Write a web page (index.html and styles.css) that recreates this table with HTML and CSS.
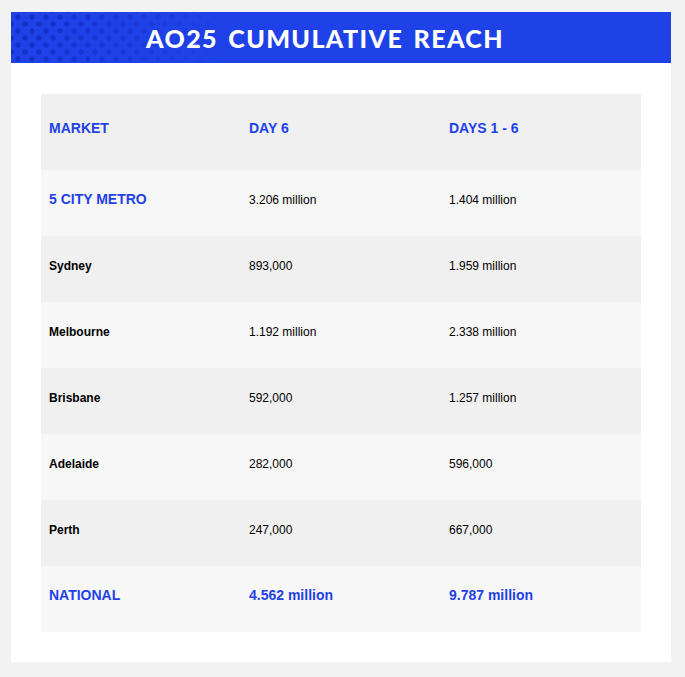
FILE: index.html
```html
<!DOCTYPE html>
<html>
<head>
<meta charset="utf-8">
<link rel="stylesheet" href="styles.css">
</head>
<body>
<div class="card">
  <div class="banner">
    <h1 class="title">AO25 CUMULATIVE REACH</h1>
  </div>
  <div class="content">
    <table class="reach">
      <tr class="head"><th>MARKET</th><th>DAY 6</th><th>DAYS 1 - 6</th></tr>
      <tr class="light"><td class="metro">5 CITY METRO</td><td>3.206 million</td><td>1.404 million</td></tr>
      <tr class="dark"><td class="city">Sydney</td><td>893,000</td><td>1.959 million</td></tr>
      <tr class="light"><td class="city">Melbourne</td><td>1.192 million</td><td>2.338 million</td></tr>
      <tr class="dark"><td class="city">Brisbane</td><td>592,000</td><td>1.257 million</td></tr>
      <tr class="light"><td class="city">Adelaide</td><td>282,000</td><td>596,000</td></tr>
      <tr class="dark"><td class="city">Perth</td><td>247,000</td><td>667,000</td></tr>
      <tr class="light total"><td>NATIONAL</td><td>4.562 million</td><td>9.787 million</td></tr>
    </table>
  </div>
</div>
</body>
</html>
```
FILE: styles.css
```css
html, body { margin: 0; padding: 0; }
body {
  background: #f2f2f2;
  font-family: "Liberation Sans", Arial, sans-serif;
  padding: 12px 14px 15px 11px;
}
.card {
  background: #ffffff;
  width: 660px;
}
.banner {
  height: 51px;
  background-color: #1f42e8;
  background-image:
    radial-gradient(circle, rgba(16, 42, 190, 0.8) 2.4px, transparent 3px),
    radial-gradient(circle, rgba(16, 42, 190, 0.8) 2.4px, transparent 3px);
  background-size: 14px 14px, 14px 14px;
  background-position: 0 -2px, 7px 5px;
  display: flex;
  align-items: center;
  justify-content: center;
  position: relative;
}
.banner::before {
  content: "";
  position: absolute;
  inset: 0;
  background: linear-gradient(112deg, rgba(31, 66, 232, 0) 0px, rgba(31, 66, 232, 0.25) 70px, #1f42e8 220px);
}
.title {
  position: relative;
  margin: 0 0 0 -32px;
  color: #ffffff;
  font-family: Lato, sans-serif;
  font-weight: 900;
  font-size: 25px;
  letter-spacing: 1.4px;
  word-spacing: 3px;
}
.content {
  padding: 31px 30px 30px 30px;
}
.reach {
  width: 600px;
  border-collapse: collapse;
  table-layout: fixed;
}
.reach th, .reach td {
  box-sizing: border-box;
  width: 200px;
  padding: 0 0 6px 8px;
  text-align: left;
  font-size: 12px;
  color: #000;
  height: 66px;
  vertical-align: middle;
}
.reach th {
  height: 76px;
  padding-bottom: 8px;
  background: #f0f0f0;
  color: #1f42e8;
  font-size: 14px;
  font-weight: bold;
}
.light td { background: #f7f7f7; }
.dark td { background: #f0f0f0; }
.reach td.metro {
  color: #1f42e8;
  font-weight: bold;
  font-size: 14px;
  padding-bottom: 8px;
}
.reach td.city { font-weight: bold; }
.reach .total td {
  color: #1f42e8;
  font-weight: bold;
  font-size: 14px;
  padding-bottom: 8px;
}
```
